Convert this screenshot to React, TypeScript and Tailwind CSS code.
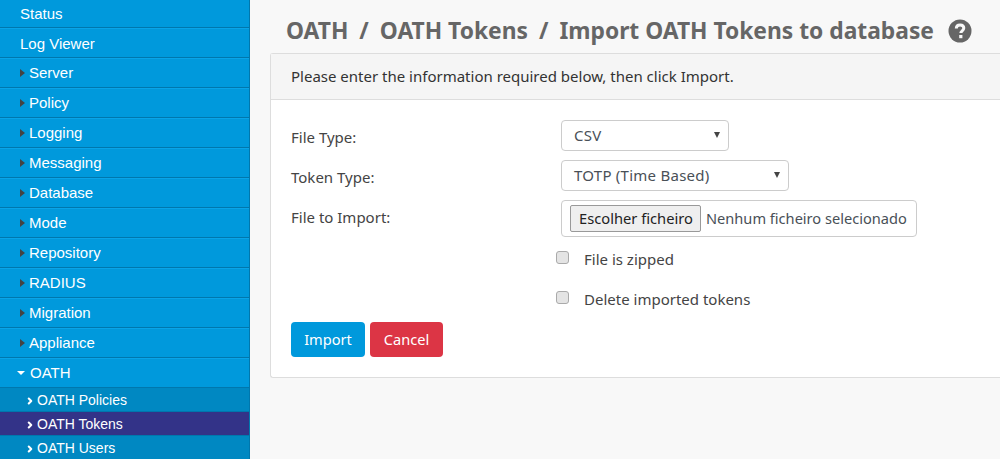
import { ChevronRight } from "lucide-react";

const menuItems = ["Server", "Policy", "Logging", "Messaging", "Database", "Mode", "Repository", "RADIUS", "Migration", "Appliance"];

const SideLink = ({ children }: { children: React.ReactNode }) => (
  <div className="h-[30px] flex items-center border-b border-b-[#0077ad] border-t border-t-[#0ba4e8] text-[15px] text-white">
    {children}
  </div>
);

const SubLink = ({ label, active }: { label: string; active?: boolean }) => (
  <div
    className={`h-6 flex items-center pl-[25px] pt-[2px] text-[14px] text-white border-b ${
      active ? "bg-[#333388] border-b-[#0077ad]" : "bg-[#0088c2] border-b-[#0077ad]"
    }`}
  >
    <ChevronRight size={10} strokeWidth={5} className="mr-[2px] mt-[1px]" />
    <span>{label}</span>
  </div>
);

const Caret = () => <span className="h-0 w-0 border-x-[3px] border-x-transparent border-t-[6px] border-t-[#444444]" />;

const Check = ({ label }: { label: string }) => (
  <div className="flex items-center h-[20px] pl-[265px] text-[#444444]">
    <span className="h-[13px] w-[13px] -mt-[3px] bg-[#e4e4e4] border border-[#aaaaaa] rounded-[3px] mr-[15px]" />
    <span>{label}</span>
  </div>
);

const App = () => {
  return (
    <div className="flex h-[459px] w-[1000px] overflow-hidden bg-[#f8f8f8]">
      {/* Sidebar */}
      <div className="w-[250px] shrink-0 bg-[#0099dc] border-r border-r-[#0077ad] font-['Liberation_Sans',sans-serif] -mt-[2px]">
        <SideLink>
          <span className="pl-5 pt-[2px]">Status</span>
        </SideLink>
        <SideLink>
          <span className="pl-5 pt-[2px]">Log Viewer</span>
        </SideLink>
        {menuItems.map((item) => (
          <SideLink key={item}>
            <span className="ml-5 mr-[4px] h-0 w-0 border-y-[4px] border-y-transparent border-l-[5px] border-l-[#444444]" />
            <span>{item}</span>
          </SideLink>
        ))}
        <SideLink>
          <span className="ml-[17px] mr-[5px] h-0 w-0 border-x-[4px] border-x-transparent border-t-[4px] border-t-white" />
          <span>OATH</span>
        </SideLink>
        <SubLink label="OATH Policies" />
        <SubLink label="OATH Tokens" active />
        <SubLink label="OATH Users" />
      </div>

      {/* Main */}
      <div className="flex-1 pl-5 pt-[16px] font-['Noto_Sans',sans-serif] text-[#444444]">
        <div className="flex items-center pl-4 h-[30px] mb-[7px] text-[22.8px] font-bold text-[#666666] whitespace-nowrap">
          <span>OATH</span>
          <span className="mx-[11px]">/</span>
          <span>OATH Tokens</span>
          <span className="mx-[11px]">/</span>
          <span>Import OATH Tokens to database</span>
          <svg viewBox="0 0 24 24" className="ml-[14px] h-[24px] w-[24px]">
            <circle cx="12" cy="12" r="11.5" fill="#666666" />
            <path d="M8.3 9.6c0-2.3 1.6-3.7 3.8-3.7s3.7 1.3 3.7 3.2c0 2.7-3 2.7-3 5" fill="none" stroke="#f8f8f8" strokeWidth="3" />
            <rect x="11.2" y="16" width="3.2" height="3.2" fill="#f8f8f8" />
          </svg>
        </div>

        <div className="bg-white border border-[#dddddd] border-r-0 rounded-l-[3px] h-[325px]">
          <div className="h-[46px] flex items-center pl-5 bg-[#f5f5f5] border-b border-b-[#dddddd] text-[15px] text-[#333333]">
            Please enter the information required below, then click Import.
          </div>
          <div className="pl-5 pt-5 text-[15px]">
            <div className="flex h-[30px] items-center mb-[10px]">
              <label className="w-[270px] pt-[5px]">File Type:</label>
              <div className="w-[168px] h-[31px] flex items-center justify-between pl-3 pr-[8px] border border-[#cccccc] rounded-[4px] text-[#495057] tracking-[0.25px]">
                <span>CSV</span>
                <Caret />
              </div>
            </div>
            <div className="flex h-[30px] items-center mb-[10px]">
              <label className="w-[270px] pt-[5px]">Token Type:</label>
              <div className="w-[228px] h-[31px] flex items-center justify-between pl-3 pr-[8px] border border-[#cccccc] rounded-[4px] text-[#495057] tracking-[0.25px]">
                <span>TOTP (Time Based)</span>
                <Caret />
              </div>
            </div>
            <div className="flex items-center h-[37px]">
              <label className="w-[270px] -mt-[2px]">File to Import:</label>
              <div className="w-[356px] h-[37px] flex items-center pl-2 border border-[#cccccc] rounded-[4px] text-[14.6px] text-[#495057]">
                <span className="h-[27px] flex items-center pl-2 w-[131px] mr-[5px] border border-[#999999] rounded-[2px] bg-[#efefef] text-[#222222] text-[14.7px]">
                  Escolher ficheiro
                </span>
                <span>Nenhum ficheiro selecionado</span>
              </div>
            </div>
            <div className="mt-[12px]">
              <Check label="File is zipped" />
            </div>
            <div className="mt-[20px]">
              <Check label="Delete imported tokens" />
            </div>
            <div className="flex gap-[5px] mt-[13px] text-[14.6px]">
              <button className="h-[35px] w-[74px] rounded-[4px] bg-[#0099dc] text-white">Import</button>
              <button className="h-[35px] w-[73px] rounded-[4px] bg-[#dc3545] text-white">Cancel</button>
            </div>
          </div>
        </div>
      </div>
    </div>
  );
};

export default App;
